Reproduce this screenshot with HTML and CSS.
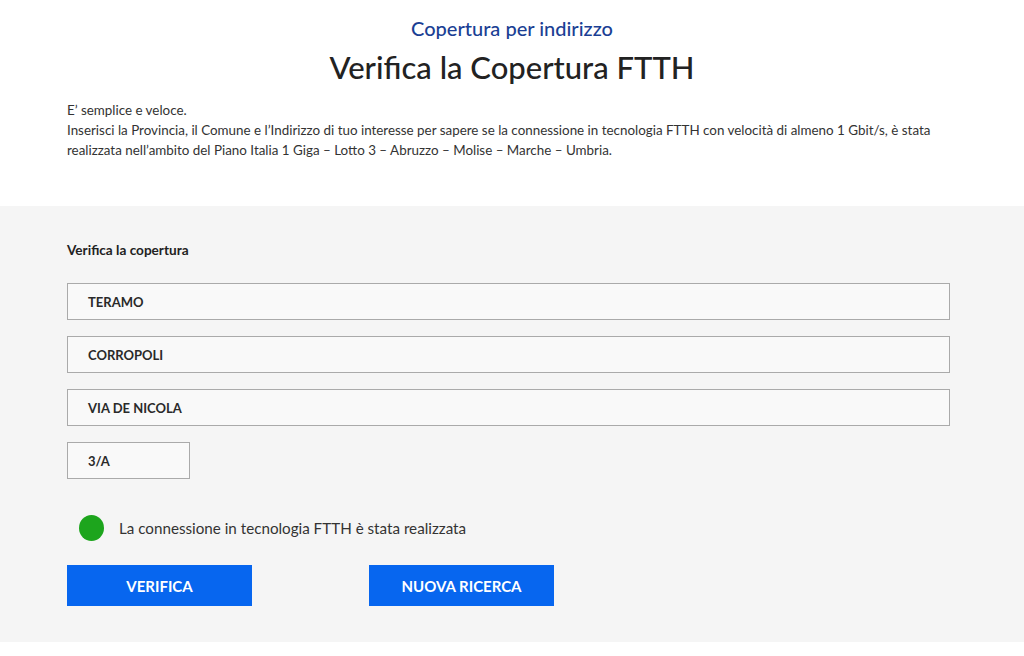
FILE: index.html
```html
<!DOCTYPE html>
<html lang="it">
<head>
<meta charset="utf-8">
<title>Verifica la Copertura FTTH</title>
<link rel="stylesheet" href="styles.css">
</head>
<body>
<header class="intro">
  <h2 class="kicker">Copertura per indirizzo</h2>
  <h1 class="title">Verifica la Copertura FTTH</h1>
  <p class="desc">E’ semplice e veloce.<br>Inserisci la Provincia, il Comune e l’Indirizzo di tuo interesse per sapere se la connessione in tecnologia FTTH con velocità di almeno 1 Gbit/s, è stata realizzata nell’ambito del Piano Italia 1 Giga – Lotto 3 – Abruzzo – Molise – Marche – Umbria.</p>
</header>
<section class="panel">
  <h3 class="panel-title">Verifica la copertura</h3>
  <div class="fields">
    <div class="field">TERAMO</div>
    <div class="field">CORROPOLI</div>
    <div class="field">VIA DE NICOLA</div>
    <div class="field field-small">3/A</div>
  </div>
  <div class="result">
    <span class="dot"></span>
    <span class="result-text">La connessione in tecnologia FTTH è stata realizzata</span>
  </div>
  <div class="actions">
    <button class="btn">VERIFICA</button>
    <button class="btn">NUOVA RICERCA</button>
  </div>
</section>
</body>
</html>
```
FILE: styles.css
```css
* { box-sizing: border-box; }
html, body { margin: 0; padding: 0; background: #fff; }
body { font-family: Lato, "Open Sans", sans-serif; color: #333; }

.intro { padding: 15px 67px 0; }
.kicker {
  margin: 0;
  text-align: center;
  font-size: 20px;
  font-weight: 500;
  color: #1b3f94;
  line-height: 26px;
}
.title {
  margin: 6px 0 0;
  text-align: center;
  font-size: 31px;
  font-weight: 500;
  color: #222;
  line-height: 40px;
}
.desc {
  margin: 13px 0 0;
  font-size: 13.4px;
  line-height: 20px;
  color: #333;
  height: 106px;
}

.panel {
  background: #f5f5f5;
  padding: 36px 74px 36px 67px;
  height: 436px;
}
.panel-title {
  margin: 0;
  font-size: 13.6px;
  font-weight: 700;
  color: #222;
  line-height: 16px;
}
.fields {
  margin-top: 25px;
  display: flex;
  flex-direction: column;
  gap: 16px;
}
.field {
  height: 37px;
  background: #f9f9f9;
  border: 1px solid #aaa;
  padding: 0 20px;
  display: flex;
  align-items: center;
  font-size: 13px;
  font-weight: 700;
  color: #2a2a2a;
}
.field-small { width: 123px; }

.result {
  margin-top: 36px;
  display: flex;
  align-items: center;
  padding-left: 12px;
  gap: 15px;
}
.dot {
  width: 25px;
  height: 26px;
  border-radius: 50%;
  background: #1da51d;
}
.result-text { font-size: 15.2px; color: #333; }

.actions {
  margin-top: 24px;
  display: flex;
  gap: 117px;
}
.btn {
  width: 185px;
  height: 41px;
  border: 0;
  background: #0766ef;
  color: #fff;
  font-family: inherit;
  font-size: 15px;
  font-weight: 700;
}
```
